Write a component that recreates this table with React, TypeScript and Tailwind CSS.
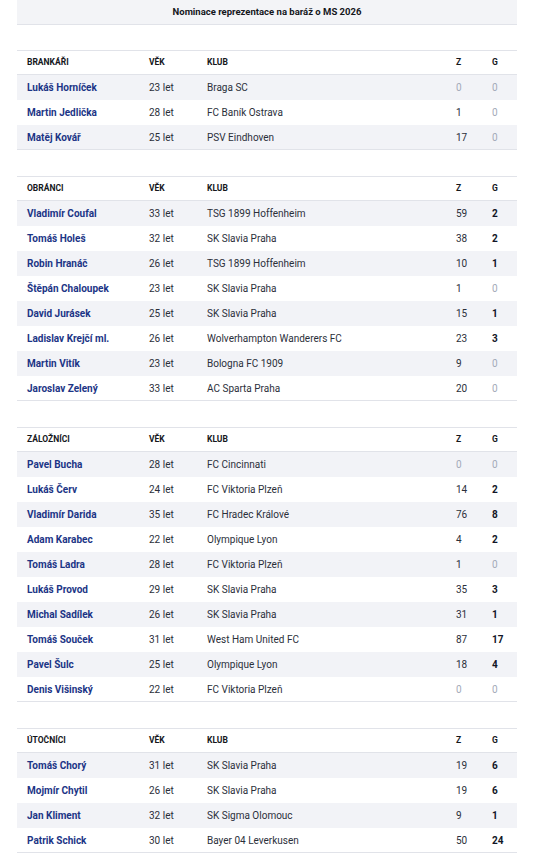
type Player = {
  name: string;
  age: number;
  club: string;
  z: number;
  g: number;
};

type Group = {
  title: string;
  players: Player[];
};

const GROUPS: Group[] = [
  {
    title: "Brankáři",
    players: [
      { name: "Lukáš Horníček", age: 23, club: "Braga SC", z: 0, g: 0 },
      { name: "Martin Jedlička", age: 28, club: "FC Baník Ostrava", z: 1, g: 0 },
      { name: "Matěj Kovář", age: 25, club: "PSV Eindhoven", z: 17, g: 0 },
    ],
  },
  {
    title: "Obránci",
    players: [
      { name: "Vladimír Coufal", age: 33, club: "TSG 1899 Hoffenheim", z: 59, g: 2 },
      { name: "Tomáš Holeš", age: 32, club: "SK Slavia Praha", z: 38, g: 2 },
      { name: "Robin Hranáč", age: 26, club: "TSG 1899 Hoffenheim", z: 10, g: 1 },
      { name: "Štěpán Chaloupek", age: 23, club: "SK Slavia Praha", z: 1, g: 0 },
      { name: "David Jurásek", age: 25, club: "SK Slavia Praha", z: 15, g: 1 },
      { name: "Ladislav Krejčí ml.", age: 26, club: "Wolverhampton Wanderers FC", z: 23, g: 3 },
      { name: "Martin Vitík", age: 23, club: "Bologna FC 1909", z: 9, g: 0 },
      { name: "Jaroslav Zelený", age: 33, club: "AC Sparta Praha", z: 20, g: 0 },
    ],
  },
  {
    title: "Záložníci",
    players: [
      { name: "Pavel Bucha", age: 28, club: "FC Cincinnati", z: 0, g: 0 },
      { name: "Lukáš Červ", age: 24, club: "FC Viktoria Plzeň", z: 14, g: 2 },
      { name: "Vladimír Darida", age: 35, club: "FC Hradec Králové", z: 76, g: 8 },
      { name: "Adam Karabec", age: 22, club: "Olympique Lyon", z: 4, g: 2 },
      { name: "Tomáš Ladra", age: 28, club: "FC Viktoria Plzeň", z: 1, g: 0 },
      { name: "Lukáš Provod", age: 29, club: "SK Slavia Praha", z: 35, g: 3 },
      { name: "Michal Sadílek", age: 26, club: "SK Slavia Praha", z: 31, g: 1 },
      { name: "Tomáš Souček", age: 31, club: "West Ham United FC", z: 87, g: 17 },
      { name: "Pavel Šulc", age: 25, club: "Olympique Lyon", z: 18, g: 4 },
      { name: "Denis Višinský", age: 22, club: "FC Viktoria Plzeň", z: 0, g: 0 },
    ],
  },
  {
    title: "Útočníci",
    players: [
      { name: "Tomáš Chorý", age: 31, club: "SK Slavia Praha", z: 19, g: 6 },
      { name: "Mojmír Chytil", age: 26, club: "SK Slavia Praha", z: 19, g: 6 },
      { name: "Jan Kliment", age: 32, club: "SK Sigma Olomouc", z: 9, g: 1 },
      { name: "Patrik Schick", age: 30, club: "Bayer 04 Leverkusen", z: 50, g: 24 },
    ],
  },
];

function GroupTable({ group }: { group: Group }) {
  return (
    <table className="w-full table-fixed border-collapse border-y border-[#e1e3e9]">
      <colgroup>
        <col className="w-[122px]" />
        <col className="w-[58px]" />
        <col />
        <col className="w-[36px]" />
        <col className="w-[35px]" />
      </colgroup>
      <thead>
        <tr className="h-[24px] border-b border-[#e1e3e9] text-[8.5px] font-bold uppercase text-[#15171c]">
          <th className="pl-[10px] text-left font-bold">{group.title}</th>
          <th className="pl-[10px] text-left font-bold">Věk</th>
          <th className="pl-[10px] text-left font-bold">Klub</th>
          <th className="pl-[10px] text-left font-bold">Z</th>
          <th className="pl-[10px] text-left font-bold">G</th>
        </tr>
      </thead>
      <tbody>
        {group.players.map((p, i) => (
          <tr
            key={p.name}
            className={`h-[25px] text-[10px] ${i % 2 === 0 ? "bg-[#f2f3f7]" : "bg-white"}`}
          >
            <td className="pl-[10px] pt-px font-bold text-[#1c3586] whitespace-nowrap">
              {p.name}
            </td>
            <td className="pl-[10px] pt-px text-[#2b2f3a]">{p.age} let</td>
            <td className="pl-[10px] pt-px text-[#2b2f3a] whitespace-nowrap">{p.club}</td>
            <td
              className={`pl-[10px] pt-px ${p.z === 0 ? "text-[#a3aab9]" : "text-[#2b2f3a]"}`}
            >
              {p.z}
            </td>
            <td
              className={`pl-[10px] pt-px ${
                p.g === 0 ? "text-[#a3aab9]" : "font-bold text-[#121626]"
              }`}
            >
              {p.g}
            </td>
          </tr>
        ))}
      </tbody>
    </table>
  );
}

export default function App() {
  return (
    <div
      className="min-h-screen bg-white px-[17px]"
      style={{ fontFamily: "Roboto, 'Noto Sans', sans-serif" }}
    >
      <div className="flex h-[25px] items-center justify-center border-b border-[#e1e3e9] bg-[#f3f4f7]">
        <h1 className="text-[9.5px] font-bold text-[#15171c]">
          Nominace reprezentace na baráž o MS 2026
        </h1>
      </div>

      <div className="flex flex-col gap-[26px] pt-[25px]">
        {GROUPS.map((g) => (
          <GroupTable key={g.title} group={g} />
        ))}
      </div>
    </div>
  );
}
